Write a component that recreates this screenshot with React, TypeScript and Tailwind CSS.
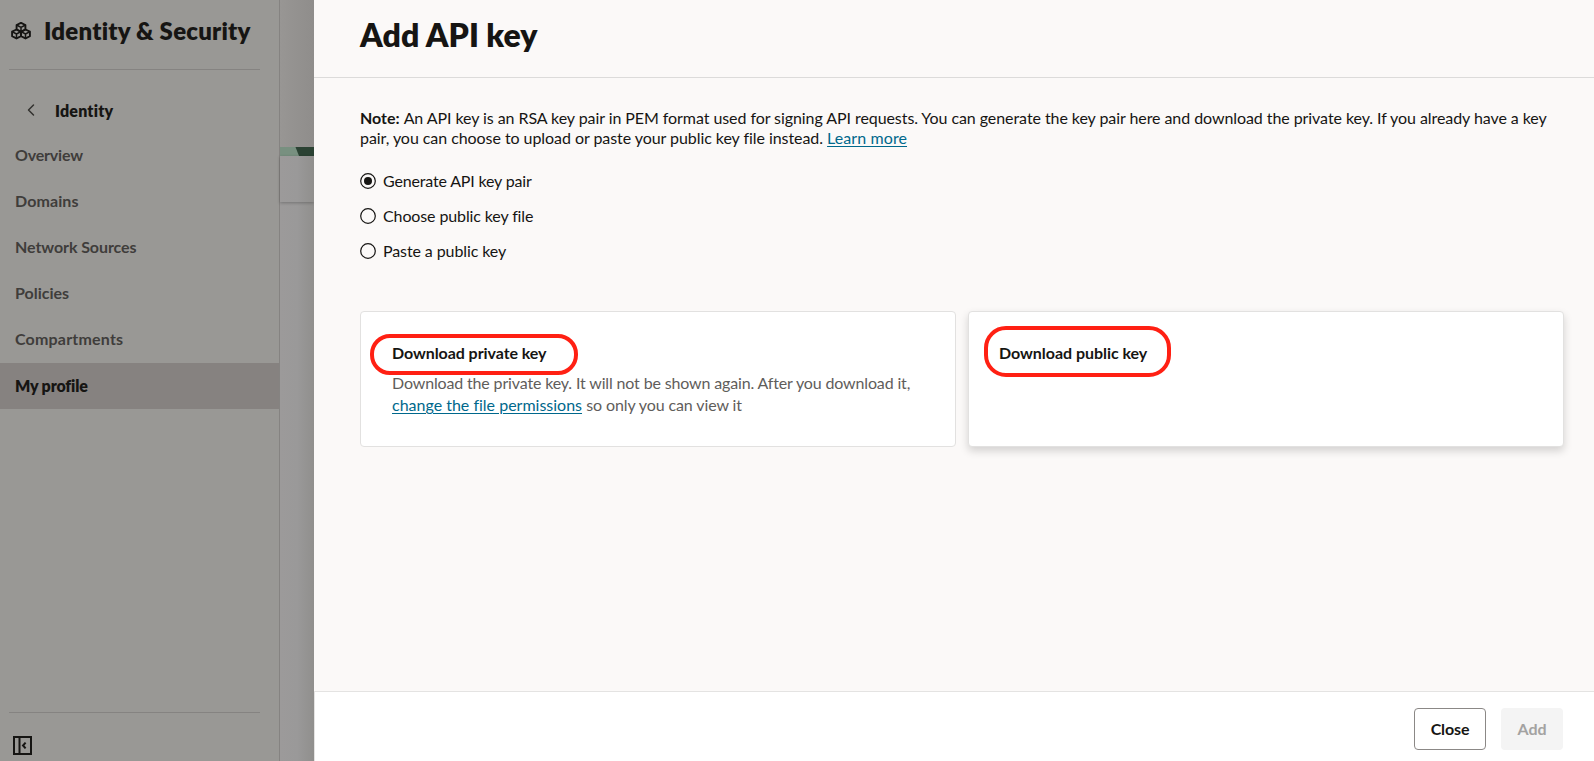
import { ChevronLeft } from 'lucide-react';

type NavItem = { label: string; tracking: string; active?: boolean };

const navItems: NavItem[] = [
  { label: 'Overview', tracking: 'tracking-[-0.2px]' },
  { label: 'Domains', tracking: 'tracking-[0.1px]' },
  { label: 'Network Sources', tracking: 'tracking-[-0.08px]' },
  { label: 'Policies', tracking: 'tracking-[0px]' },
  { label: 'Compartments', tracking: 'tracking-[0.19px]' },
  { label: 'My profile', tracking: 'tracking-[-0.16px]', active: true },
];

const radioOptions = [
  { label: 'Generate API key pair', tracking: 'tracking-[-0.17px]', selected: true },
  { label: 'Choose public key file', tracking: 'tracking-[-0.12px]', selected: false },
  { label: 'Paste a public key', tracking: 'tracking-[-0.1px]', selected: false },
];

const cubes = [
  [10, 5.3],
  [5.5, 12],
  [14.5, 12],
];

function CubesIcon() {
  return (
    <svg
      className="h-[18px] w-5 shrink-0"
      viewBox="0 0 20 18"
      fill="none"
      stroke="#161513"
      strokeWidth="1.9"
      strokeLinejoin="round"
    >
      {cubes.map(([x, y]) => (
        <g key={`${x}-${y}`} transform={`translate(${x} ${y})`}>
          <path d="M0-4.5L4.4-2.3v4.5L0 4.5l-4.4-2.3v-4.5z" />
          <path d="M-4.4-2.3L0 0l4.4-2.3M0 0v4.5" strokeWidth="1.5" />
        </g>
      ))}
    </svg>
  );
}

function CollapseIcon() {
  return (
    <svg className="h-[19px] w-[19px]" viewBox="0 0 19 19" fill="none" stroke="#161513" strokeWidth="2">
      <rect x="1" y="1" width="17" height="17" />
      <path d="M6.5 1v17" />
      <path d="M12.6 6.6L10 9.5l2.6 2.9" />
    </svg>
  );
}

function Sidebar() {
  return (
    <aside className="flex w-[280px] shrink-0 flex-col border-r border-[#858381] bg-[#999895]">
      <div className="ml-[9px] flex h-[70px] w-[251px] items-center border-b border-[#858381] pb-2 pl-0.5">
        <CubesIcon />
        <h2 className="ml-[13px] whitespace-nowrap text-[24px] font-extrabold leading-8 tracking-[0.22px] text-[#161513]">
          Identity &amp; Security
        </h2>
      </div>
      <div className="mt-[17px] flex h-[46px] items-center">
        <ChevronLeft className="ml-[21px] h-5 w-5 text-[#33322f]" strokeWidth={1.8} />
        <span className="ml-[14px] text-[16px] font-extrabold leading-[23px] tracking-[0.2px] text-[#161513]">
          Identity
        </span>
      </div>
      <nav className="flex flex-col">
        {navItems.map((item) => (
          <a
            key={item.label}
            className={`flex h-[46px] items-center pl-[15px] text-[16px] ${item.tracking} ${
              item.active ? 'bg-[#868280] font-extrabold text-[#161513]' : 'pb-0.5 font-bold text-[#3f3d3b]'
            }`}
          >
            {item.label}
          </a>
        ))}
      </nav>
      <div className="mt-auto ml-[9px] h-[49px] w-[251px] border-t border-[#858381] pt-[23px] pl-1">
        <CollapseIcon />
      </div>
    </aside>
  );
}

function DimmedContent() {
  return (
    <div className="flex w-[34px] shrink-0 flex-col bg-linear-to-r from-[#9c9a9a] via-[#9a9999] to-[#908f8d]">
      <div className="h-[147px] bg-linear-to-r from-[#989694] to-[#8f8d8b]" />
      <svg className="h-[9px] w-[34px]" viewBox="0 0 34 9">
        <path d="M0 0h34v9H0z" fill="#2b4233" />
        <path d="M0 0h15.5l3.5 9H0z" fill="#789080" />
      </svg>
      <div className="h-[46px] shadow-[0_1px_3px_rgba(0,0,0,0.25)]" />
    </div>
  );
}

function Radio({ selected }: { selected: boolean }) {
  return (
    <svg className="h-4 w-4 shrink-0" viewBox="0 0 16 16" fill="none">
      <circle cx="8" cy="8" r="7.3" stroke="#161513" strokeWidth="1.2" />
      {selected && <circle cx="8" cy="8" r="4" fill="#161513" />}
    </svg>
  );
}

function Highlight({ className }: { className: string }) {
  return <span className={`pointer-events-none absolute border-4 border-[#ff2013] ${className}`} />;
}

export default function App() {
  return (
    <div className="flex h-[761px] w-[1594px] overflow-hidden font-['Lato',sans-serif] text-[16px] text-[#161513] [font-variant-ligatures:none]">
      <Sidebar />
      <DimmedContent />
      <main className="flex min-w-0 flex-1 flex-col bg-[#fbf9f8]">
        <header className="flex h-[78px] items-center border-b border-[#dcdbda] pb-2 pl-[46px]">
          <h1 className="text-[32px] font-extrabold leading-10 tracking-[0.05px]">Add API key</h1>
        </header>

        <div className="flex-1 pt-[30px] pr-[30px] pl-[46px]">
          <p className="whitespace-nowrap leading-5">
            <b className="tracking-[-0.03px]">Note:</b>{' '}
            <span className="tracking-[-0.07px]">
              An API key is an RSA key pair in PEM format used for signing API requests. You can generate the key pair
              here and download the private key. If you already have a key
            </span>
            <br />
            <span className="tracking-[-0.06px]">
              pair, you can choose to upload or paste your public key file instead.
            </span>{' '}
            <a className="tracking-[0.09px] text-[#00688c] underline underline-offset-2">Learn more</a>
          </p>

          <div className="mt-[15px] flex flex-col">
            {radioOptions.map((option) => (
              <label key={option.label} className="flex h-[35px] items-center gap-[7px]">
                <Radio selected={option.selected} />
                <span className={option.tracking}>{option.label}</span>
              </label>
            ))}
          </div>

          <div className="mt-[43px] grid grid-cols-2 gap-3">
            <section className="relative h-[136px] rounded border border-[#e2e1e0] bg-white pt-[29px] pl-[31px]">
              <h3 className="font-bold leading-6 tracking-[-0.07px]">Download private key</h3>
              <p className="mt-[7px] whitespace-nowrap leading-[22px] text-[#5f5d5b]">
                <span className="tracking-[-0.15px]">
                  Download the private key. It will not be shown again. After you download it,
                </span>
                <br />
                <a className="text-[#00688c] underline underline-offset-2">change the file permissions</a>{' '}
                <span className="tracking-[-0.1px]">so only you can view it</span>
              </p>
              <Highlight className="top-[22px] left-[9px] h-[41px] w-[208px] rounded-[20px]" />
            </section>
            <section className="relative h-[136px] rounded border border-[#e2e1e0] bg-white pt-[29px] pl-[30px] shadow-[0_4px_8px_rgba(0,0,0,0.16)]">
              <h3 className="font-bold leading-6 tracking-[-0.04px]">Download public key</h3>
              <Highlight className="top-[14px] left-[15px] h-[51px] w-[187px] rounded-[22px]" />
            </section>
          </div>
        </div>

        <footer className="flex h-[70px] shrink-0 items-center justify-end gap-[15px] border-t border-l border-[#e4e3e2] bg-white pt-[5px] pr-[31px] pb-px">
          <button className="h-[42px] w-[72px] rounded border border-[#8b8886] font-bold tracking-[-0.13px]">
            Close
          </button>
          <button className="h-[42px] w-[62px] rounded bg-[#f4f4f4] font-bold text-[#a3a2a1]">Add</button>
        </footer>
      </main>
    </div>
  );
}
